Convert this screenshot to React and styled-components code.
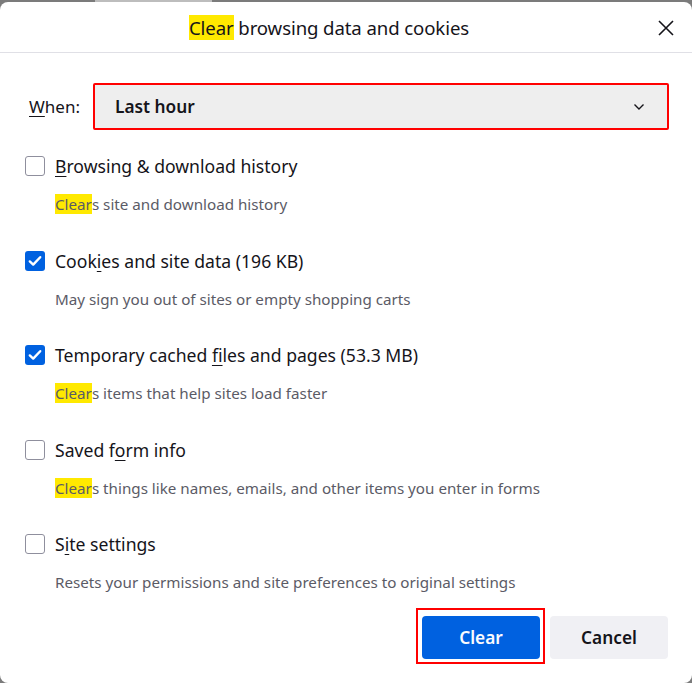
import styled, { createGlobalStyle } from "styled-components";

const GlobalStyle = createGlobalStyle`
  html, body {
    margin: 0;
    padding: 0;
    background: #7b7b7b;
    height: 100%;
    overflow: hidden;
  }
  * { box-sizing: border-box; }
`;

const Page = styled.div`
  display: flex;
  flex-direction: column;
  height: 683px;
  font-family: "Noto Sans", "Open Sans", sans-serif;
  color: #15141a;
`;

const Backdrop = styled.div`
  height: 2px;
  display: flex;
  padding-left: 95px;
`;

const BehindStrip = styled.div`
  width: 117px;
  background: #bdbdbd;
`;

const Dialog = styled.div`
  flex: 1;
  background: #fff;
  border-radius: 8px;
  display: flex;
  flex-direction: column;
`;

const Header = styled.div`
  height: 51px;
  border-bottom: 1px solid #e0e0e6;
  display: flex;
  align-items: center;
  justify-content: center;
  padding-right: 34px;
  position: relative;
`;

const Title = styled.h1`
  margin: 0;
  font-size: 18.6px;
  font-weight: 400;
  letter-spacing: -0.1px;
`;

const Mark = styled.span`
  background: #ffe900;
`;

const CloseButton = styled.button`
  position: absolute;
  right: 16px;
  top: 16px;
  width: 20px;
  height: 20px;
  border: none;
  background: none;
  padding: 0;
  display: flex;
  align-items: center;
  justify-content: center;
`;

const Body = styled.div`
  display: flex;
  flex-direction: column;
  padding: 30px 23px 0 25px;
`;

const WhenRow = styled.div`
  display: flex;
  align-items: center;
  gap: 13px;
  padding-left: 4px;
`;

const WhenLabel = styled.span`
  font-size: 17px;
`;

const U = styled.span`
  text-decoration: underline;
  text-underline-offset: 3px;
  text-decoration-thickness: 1px;
`;

const SelectBox = styled.div`
  flex: 1;
  height: 47px;
  border: 2px solid #ff0000;
  border-radius: 2px;
  background: #eeeeee;
  display: flex;
  align-items: center;
  justify-content: space-between;
  padding: 0 22px 0 20px;
  font-size: 17.3px;
  font-weight: 600;
`;

const Options = styled.div`
  display: flex;
  flex-direction: column;
  margin-top: 24px;
`;

const Option = styled.div`
  display: flex;
  flex-direction: column;
  height: 94.5px;

  &:last-child {
    height: 78px;
  }
`;

const OptionRow = styled.label`
  display: flex;
  align-items: center;
  gap: 10px;
  height: 24px;
`;

const Box = styled.span`
  width: 20px;
  height: 20px;
  border-radius: 3px;
  flex-shrink: 0;
  display: flex;
  align-items: center;
  justify-content: center;
  border: ${(p) => (p.$checked ? "none" : "1px solid #8f8f9d")};
  background: ${(p) => (p.$checked ? "#0061e0" : "#fff")};
`;

const OptionLabel = styled.span`
  font-size: 17.6px;
`;

const Description = styled.div`
  margin: 16px 0 0 30px;
  font-size: 15.2px;
  color: #5b5b66;
`;

const Footer = styled.div`
  display: flex;
  justify-content: flex-end;
  gap: 10px;
  padding: 6px 24px 0 0;
`;

const Outline = styled.div`
  border: 2px solid #ff0000;
  padding: 6px 3px 3px 4px;
  margin: -8px -5px -5px 0;
`;

const Button = styled.button`
  width: 118px;
  height: 43px;
  border: none;
  border-radius: 4px;
  font-family: inherit;
  font-size: 17.3px;
  font-weight: 600;
  background: ${(p) => (p.$primary ? "#0061e0" : "#f0f0f4")};
  color: ${(p) => (p.$primary ? "#fbfbfe" : "#15141a")};
`;

const options = [
  {
    label: [<U key="u">B</U>, "rowsing & download history"],
    desc: [<Mark key="m">Clear</Mark>, "s site and download history"],
    checked: false,
  },
  {
    label: ["Cook", <U key="u">i</U>, "es and site data (196 KB)"],
    desc: ["May sign you out of sites or empty shopping carts"],
    checked: true,
  },
  {
    label: ["Temporary cached ", <U key="u">f</U>, "iles and pages (53.3 MB)"],
    desc: [<Mark key="m">Clear</Mark>, "s items that help sites load faster"],
    checked: true,
  },
  {
    label: ["Saved f", <U key="u">o</U>, "rm info"],
    desc: [<Mark key="m">Clear</Mark>, "s things like names, emails, and other items you enter in forms"],
    checked: false,
  },
  {
    label: ["S", <U key="u">i</U>, "te settings"],
    desc: ["Resets your permissions and site preferences to original settings"],
    checked: false,
  },
];

export default function App() {
  return (
    <Page>
      <GlobalStyle />
      <Backdrop>
        <BehindStrip />
      </Backdrop>
      <Dialog>
        <Header>
          <Title>
            <Mark>Clear</Mark> browsing data and cookies
          </Title>
          <CloseButton aria-label="Close">
            <svg width="16" height="16" viewBox="0 0 16 16">
              <path d="M1 1L15 15M15 1L1 15" stroke="#15141a" strokeWidth="1.6" />
            </svg>
          </CloseButton>
        </Header>
        <Body>
          <WhenRow>
            <WhenLabel>
              <U>W</U>hen:
            </WhenLabel>
            <SelectBox>
              <span>Last hour</span>
              <svg width="12" height="8" viewBox="0 0 12 8">
                <path d="M1.5 1.5L6 6L10.5 1.5" fill="none" stroke="#15141a" strokeWidth="1.4" />
              </svg>
            </SelectBox>
          </WhenRow>
          <Options>
            {options.map((o, i) => (
              <Option key={i}>
                <OptionRow>
                  <Box $checked={o.checked}>
                    {o.checked && (
                      <svg width="14" height="12" viewBox="0 0 14 12">
                        <path d="M1.8 6.4L5.2 9.6L12.2 2.2" fill="none" stroke="#fff" strokeWidth="2.4" strokeLinecap="round" strokeLinejoin="round" />
                      </svg>
                    )}
                  </Box>
                  <OptionLabel>{o.label}</OptionLabel>
                </OptionRow>
                <Description>{o.desc}</Description>
              </Option>
            ))}
          </Options>
        </Body>
        <Footer>
          <Outline>
            <Button $primary>Clear</Button>
          </Outline>
          <Button>Cancel</Button>
        </Footer>
      </Dialog>
    </Page>
  );
}
